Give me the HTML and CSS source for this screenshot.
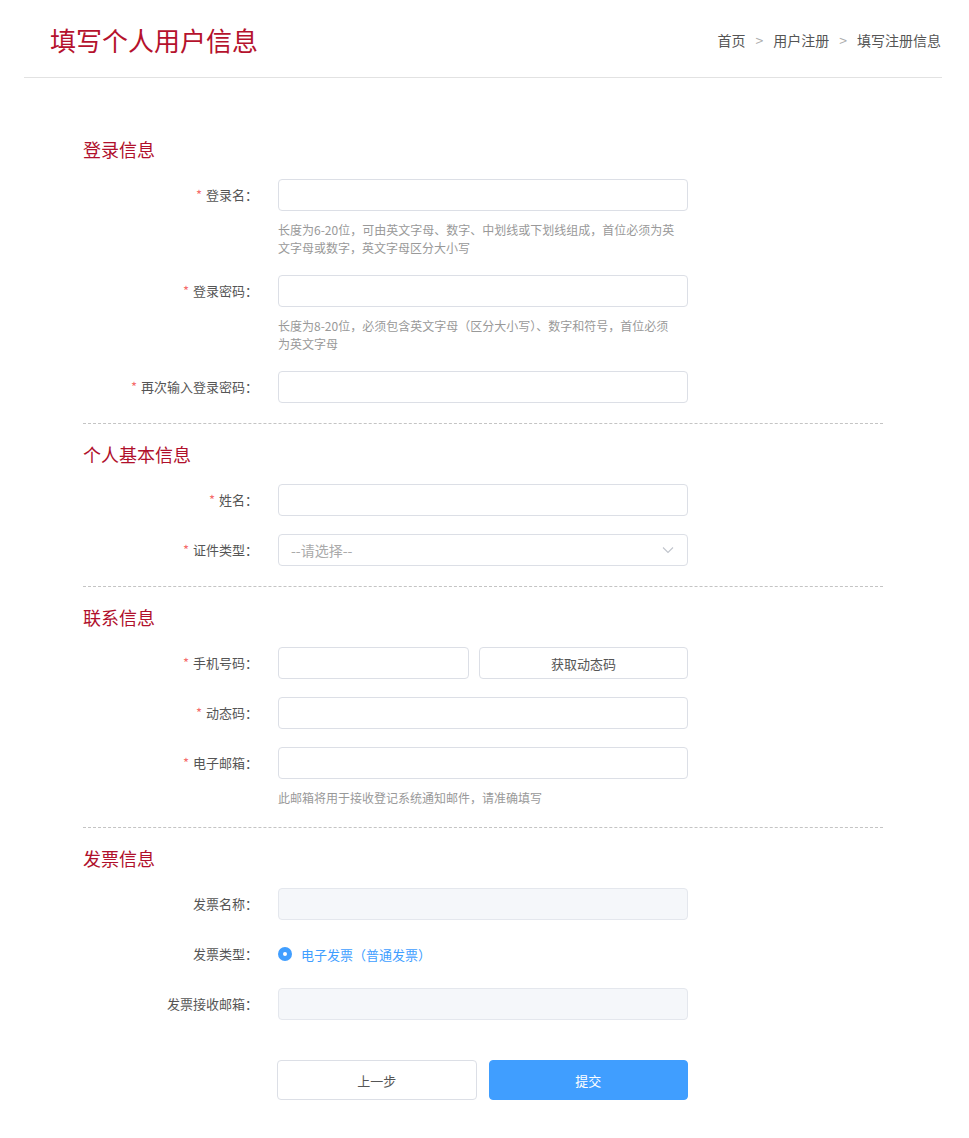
FILE: index.html
```html
<!DOCTYPE html>
<html lang="zh-CN">
<head>
<meta charset="utf-8">
<title>填写个人用户信息</title>
<link rel="stylesheet" href="styles.css">
</head>
<body>
<div class="page">
  <header class="header">
    <h1 class="page-title">填写个人用户信息</h1>
    <nav class="crumbs">
      <span>首页</span><span class="sep">&gt;</span><span>用户注册</span><span class="sep">&gt;</span><span>填写注册信息</span>
    </nav>
  </header>

  <form class="form">
    <section class="section first">
      <h2 class="section-title">登录信息</h2>
      <div class="row">
        <label class="label"><span class="req">*</span>登录名：</label>
        <input class="input" type="text">
        <p class="hint">长度为6-20位，可由英文字母、数字、中划线或下划线组成，首位必须为英文字母或数字，英文字母区分大小写</p>
      </div>
      <div class="row">
        <label class="label"><span class="req">*</span>登录密码：</label>
        <input class="input" type="password">
        <p class="hint">长度为8-20位，必须包含英文字母（区分大小写）、数字和符号，首位必须为英文字母</p>
      </div>
      <div class="row">
        <label class="label"><span class="req">*</span>再次输入登录密码：</label>
        <input class="input" type="password">
      </div>
    </section>

    <section class="section">
      <h2 class="section-title">个人基本信息</h2>
      <div class="row">
        <label class="label"><span class="req">*</span>姓名：</label>
        <input class="input" type="text">
      </div>
      <div class="row">
        <label class="label"><span class="req">*</span>证件类型：</label>
        <div class="select">
          <span class="placeholder">--请选择--</span>
          <svg class="chevron" width="12" height="8" viewBox="0 0 12 8"><polyline points="1,1.5 6,6.5 11,1.5" fill="none" stroke="#c0c4cc" stroke-width="1.1"/></svg>
        </div>
      </div>
    </section>

    <section class="section">
      <h2 class="section-title">联系信息</h2>
      <div class="row">
        <label class="label"><span class="req">*</span>手机号码：</label>
        <div class="group">
          <input class="input phone" type="text">
          <button type="button" class="btn code-btn">获取动态码</button>
        </div>
      </div>
      <div class="row">
        <label class="label"><span class="req">*</span>动态码：</label>
        <input class="input" type="text">
      </div>
      <div class="row">
        <label class="label"><span class="req">*</span>电子邮箱：</label>
        <input class="input" type="text">
        <p class="hint">此邮箱将用于接收登记系统通知邮件，请准确填写</p>
      </div>
    </section>

    <section class="section">
      <h2 class="section-title">发票信息</h2>
      <div class="row">
        <label class="label">发票名称：</label>
        <input class="input disabled" type="text" disabled>
      </div>
      <div class="row">
        <label class="label">发票类型：</label>
        <div class="radio">
          <span class="radio-dot"></span>
          <span class="radio-text">电子发票（普通发票）</span>
        </div>
      </div>
      <div class="row">
        <label class="label">发票接收邮箱：</label>
        <input class="input disabled" type="text" disabled>
      </div>
      <div class="row actions-row">
        <div class="actions">
          <button type="button" class="btn act">上一步</button>
          <button type="button" class="btn act primary">提交</button>
        </div>
      </div>
    </section>
  </form>
</div>
</body>
</html>
```

FILE: styles.css
```css
* { box-sizing: border-box; }
body {
  margin: 0;
  background: #fff;
  font-family: "Noto Sans CJK SC", "Noto Sans", sans-serif;
  color: #555;
}
.page {
  width: 918px;
  margin-left: 24px;
}
.header {
  height: 78px;
  border-bottom: 1px solid #e2e2e2;
  display: flex;
  align-items: center;
  justify-content: space-between;
  padding: 2px 0 0 26px;
}
.page-title {
  margin: 0;
  font-size: 26px;
  line-height: 32px;
  font-weight: normal;
  color: #b5122d;
}
.crumbs {
  font-size: 14px;
  color: #555;
  display: flex;
  align-items: center;
  margin-right: 1px;
}
.crumbs .sep {
  color: #aaa;
  margin: 0 10px;
}
.form {
  width: 800px;
  margin: 0 auto;
}
.section {
  border-top: 1px dashed #c4c4c4;
  padding: 18px 0 2px;
}
.section.first {
  border-top: none;
  padding-top: 59px;
}
.section-title {
  margin: 0 0 18px;
  font-size: 18px;
  line-height: 24px;
  font-weight: normal;
  color: #b0102c;
}
.row {
  display: grid;
  grid-template-columns: 175px 410px;
  column-gap: 20px;
  margin-bottom: 18px;
}
.label {
  text-align: right;
  font-size: 13px;
  line-height: 32px;
  color: #555;
  white-space: nowrap;
}
.req {
  color: #f56c6c;
  margin-right: 4px;
}
.input {
  height: 32px;
  width: 100%;
  border: 1px solid #dcdfe6;
  border-radius: 4px;
  background: #fff;
  padding: 0 12px;
  font: inherit;
  outline: none;
}
.input.disabled {
  background: #f5f7fa;
  border-color: #e4e7ed;
}
.hint {
  grid-column: 2;
  margin: 10px 0 0;
  max-width: 400px;
  font-size: 12px;
  line-height: 18px;
  color: #999;
}
.select {
  height: 32px;
  border: 1px solid #dcdfe6;
  border-radius: 4px;
  display: flex;
  align-items: center;
  justify-content: space-between;
  padding: 0 13px 0 12px;
}
.placeholder {
  font-size: 14px;
  color: #aaa;
}
.group {
  display: flex;
  gap: 10px;
}
.group .phone {
  width: 191px;
  flex: none;
}
.btn {
  font-family: inherit;
  cursor: pointer;
  border: 1px solid #dcdfe6;
  border-radius: 4px;
  background: #fff;
  color: #555;
  font-size: 13px;
}
.code-btn {
  flex: 1;
  height: 32px;
}
.radio {
  height: 32px;
  display: flex;
  align-items: center;
  gap: 9px;
}
.radio-dot {
  width: 14px;
  height: 14px;
  border-radius: 50%;
  background: #409eff;
  position: relative;
  flex: none;
}
.radio-dot::after {
  content: "";
  position: absolute;
  left: 5px;
  top: 5px;
  width: 4px;
  height: 4px;
  border-radius: 50%;
  background: #fff;
}
.radio-text {
  font-size: 13px;
  color: #409eff;
}
.actions-row {
  margin-top: 40px;
  margin-bottom: 36px;
}
.actions {
  grid-column: 2;
  display: flex;
  gap: 12px;
  margin-left: -1px;
}
.act {
  width: 200px;
  height: 40px;
}
.act.primary {
  background: #409eff;
  border-color: #409eff;
  color: #fff;
  width: 200px;
}
```
